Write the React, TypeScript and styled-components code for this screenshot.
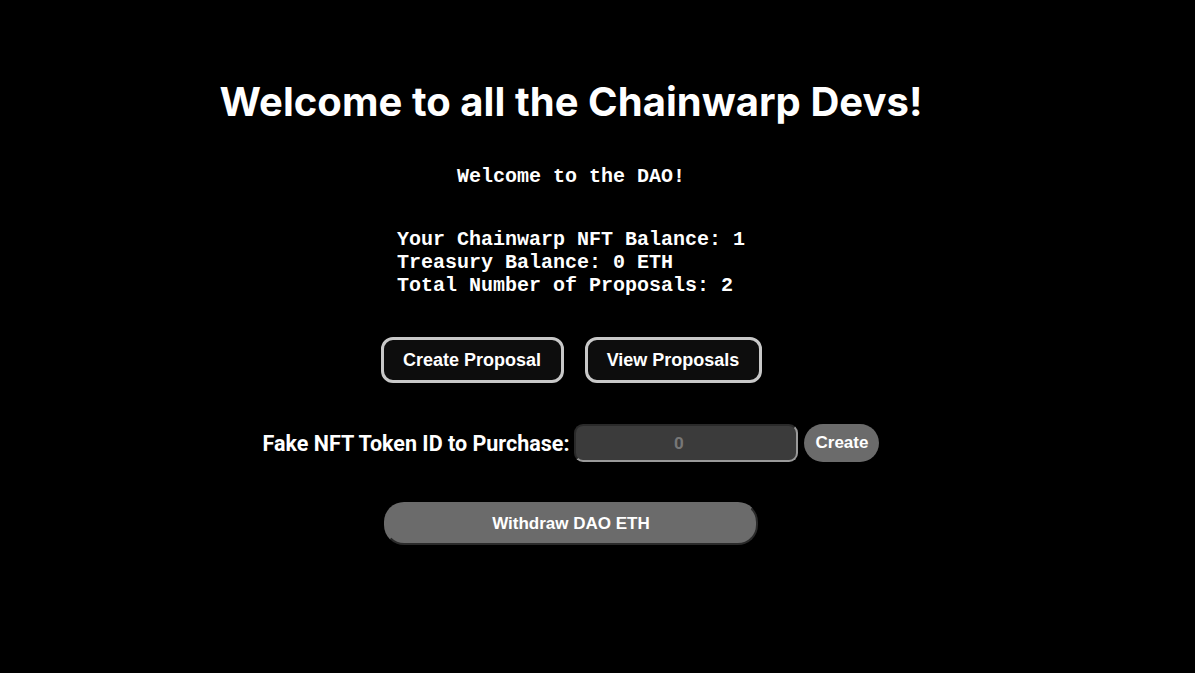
import React from "react";
import styled, { createGlobalStyle } from "styled-components";

const Global = createGlobalStyle`
  html, body { margin: 0; padding: 0; background: #000; }
  body { font-family: "Liberation Sans", Arial, sans-serif; color: #fff; }
`;

const Page = styled.main`
  width: 1142px;
  min-height: 673px;
  display: flex;
  flex-direction: column;
  align-items: center;
  padding-top: 78px;
  box-sizing: border-box;
`;

const Title = styled.h1`
  margin: 0;
  font-family: Inter, "Liberation Sans", sans-serif;
  font-weight: 700;
  font-size: 40px;
  line-height: 48px;
  letter-spacing: 0.05px;
`;

const Mono = styled.p`
  margin: 0;
  font-family: "Liberation Mono", "Courier New", monospace;
  font-weight: 700;
  font-size: 20px;
  line-height: 23px;
  white-space: pre;
`;

const Greeting = styled(Mono)`
  margin-top: 39px;
`;

const Stats = styled(Mono)`
  margin-top: 40px;
  text-align: left;
`;

const ButtonRow = styled.div`
  display: flex;
  gap: 21px;
  margin-top: 40px;
`;

const OutlineButton = styled.button<{ $w: number }>`
  width: ${(p) => p.$w}px;
  height: 46px;
  background: #0d0d0d;
  border: 3px solid #c8c8c8;
  border-radius: 12px;
  color: #fff;
  font-family: "Liberation Sans", Arial, sans-serif;
  font-weight: 700;
  font-size: 18px;
  cursor: pointer;
`;

const PurchaseRow = styled.div`
  display: flex;
  align-items: center;
  margin-top: 41px;
`;

const Label = styled.label`
  font-family: Roboto, "Liberation Sans", sans-serif;
  font-weight: 700;
  font-size: 21.5px;
  margin-right: 5px;
`;

const NumberInput = styled.input`
  width: 224px;
  height: 38px;
  box-sizing: border-box;
  background: #3b3b3b;
  border: 2px solid #8a8a8a;
  border-color: #2a2a2a #9a9a9a #9a9a9a #2a2a2a;
  border-radius: 9px;
  color: #fff;
  text-align: center;
  font-family: Roboto, "Liberation Sans", sans-serif;
  font-weight: 700;
  font-size: 17px;
  outline: none;
  &::placeholder { color: #777; }
`;

const PillButton = styled.button<{ $w: number; $h: number }>`
  width: ${(p) => p.$w}px;
  height: ${(p) => p.$h}px;
  background: #6b6b6b;
  border: none;
  border-radius: 20px;
  color: #fff;
  font-family: "Liberation Sans", Arial, sans-serif;
  font-weight: 700;
  font-size: 17px;
  cursor: pointer;
`;

const CreateButton = styled(PillButton)`
  margin-left: 6px;
`;

const WithdrawButton = styled(PillButton)`
  margin-top: 40px;
  box-sizing: border-box;
  border: 2px solid #6b6b6b;
  border-right-color: #2a2a2a;
  border-bottom-color: #2a2a2a;
`;

export default function App() {
  return (
    <>
      <Global />
      <Page>
        <Title>Welcome to all the Chainwarp Devs!</Title>
        <Greeting>Welcome to the DAO!</Greeting>
        <Stats>
          {"Your Chainwarp NFT Balance: 1\nTreasury Balance: 0 ETH\nTotal Number of Proposals: 2"}
        </Stats>
        <ButtonRow>
          <OutlineButton $w={183}>Create Proposal</OutlineButton>
          <OutlineButton $w={177}>View Proposals</OutlineButton>
        </ButtonRow>
        <PurchaseRow>
          <Label>Fake NFT Token ID to Purchase:</Label>
          <NumberInput type="number" placeholder="0" />
          <CreateButton $w={75} $h={38}>Create</CreateButton>
        </PurchaseRow>
        <WithdrawButton $w={374} $h={43}>Withdraw DAO ETH</WithdrawButton>
      </Page>
    </>
  );
}
